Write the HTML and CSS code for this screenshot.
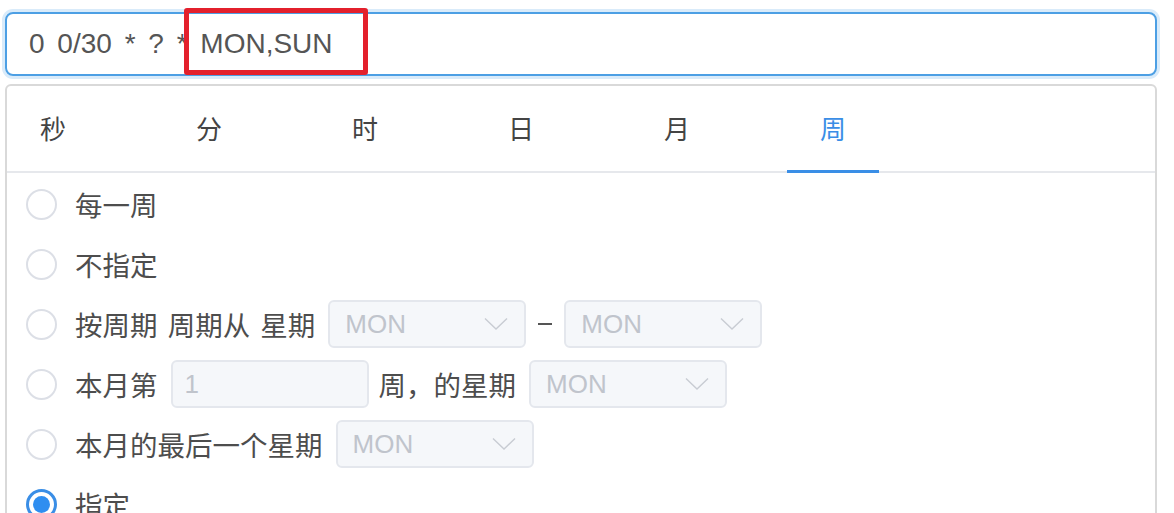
FILE: index.html
```html
<!DOCTYPE html>
<html lang="zh-CN">
  <head>
    <meta charset="UTF-8" />
    <meta name="viewport" content="width=device-width, initial-scale=1.0" />
    <title>Cron 表达式</title>
    <link rel="stylesheet" href="styles.css">
  </head>
  <body>
    <div class="cron-input">
      <span class="cron-text">0 0/30 * ? * MON,SUN</span>
      <span class="mark"></span>
    </div>

    <div class="panel">
      <div class="tabs">
        <div class="tab">秒</div>
        <div class="tab">分</div>
        <div class="tab">时</div>
        <div class="tab">日</div>
        <div class="tab">月</div>
        <div class="tab active">周</div>
      </div>

      <div class="options">
        <div class="row">
          <span class="radio"></span>
          <span class="label">每一周</span>
        </div>
        <div class="row">
          <span class="radio"></span>
          <span class="label">不指定</span>
        </div>
        <div class="row">
          <span class="radio"></span>
          <span class="label">按周期 周期从 星期</span>
          <div class="select">MON
            <svg viewBox="0 0 24 14" width="24" height="14"><polyline points="1,1.5 12,12 23,1.5" /></svg>
          </div>
          <span class="dash"></span>
          <div class="select">MON
            <svg viewBox="0 0 24 14" width="24" height="14"><polyline points="1,1.5 12,12 23,1.5" /></svg>
          </div>
        </div>
        <div class="row">
          <span class="radio"></span>
          <span class="label">本月第</span>
          <div class="field">1</div>
          <span class="label">周，的星期</span>
          <div class="select">MON
            <svg viewBox="0 0 24 14" width="24" height="14"><polyline points="1,1.5 12,12 23,1.5" /></svg>
          </div>
        </div>
        <div class="row">
          <span class="radio"></span>
          <span class="label">本月的最后一个星期</span>
          <div class="select">MON
            <svg viewBox="0 0 24 14" width="24" height="14"><polyline points="1,1.5 12,12 23,1.5" /></svg>
          </div>
        </div>
        <div class="row">
          <span class="radio checked"></span>
          <span class="label">指定</span>
        </div>
      </div>
    </div>
  </body>
</html>
```

FILE: styles.css
```css
body {
  margin: 0;
  background: #fff;
  font-family: "Liberation Sans", "Noto Sans CJK SC", sans-serif;
  color: #555;
  overflow: hidden;
}
.cron-input {
  position: relative;
  display: flex;
  align-items: center;
  height: 60px;
  margin: 12px 17px 0 5px;
  padding: 0 22px;
  border: 2px solid #4c9fe4;
  border-radius: 8px;
  box-shadow: 0 0 0 3px #d9ebfa;
}
.cron-text {
  font-size: 28px;
  word-spacing: 5px;
  color: #555;
}
.mark {
  position: absolute;
  left: 177px;
  top: -6px;
  width: 174px;
  height: 57px;
  border: 5px solid #e3202c;
  border-radius: 3px;
}
.panel {
  margin: 8px 17px 0 5px;
  height: 500px;
  border: 2px solid #d9d9d9;
  border-radius: 6px;
}
.tabs {
  display: flex;
  gap: 64px;
  height: 85px;
  border-bottom: 2px solid #e6e8ec;
}
.tab {
  position: relative;
  width: 92px;
  display: flex;
  justify-content: center;
  align-items: center;
  padding-bottom: 2px;
  font-family: "Noto Sans CJK SC", sans-serif;
  font-size: 26px;
  color: #444;
}
.tab.active {
  color: #3a8ee6;
}
.tab.active::after {
  content: "";
  position: absolute;
  left: 0;
  right: 0;
  bottom: -2px;
  height: 3px;
  background: #3a8ee6;
}
.options {
  padding: 1px 0 0 19px;
}
.row {
  display: flex;
  align-items: center;
  height: 60px;
}
.radio {
  position: relative;
  box-sizing: border-box;
  width: 31px;
  height: 31px;
  border: 2px solid #dcdfe6;
  border-radius: 50%;
  margin-right: 18px;
}
.radio.checked {
  border: 3px solid #3a8ee6;
}
.radio.checked::after {
  content: "";
  position: absolute;
  left: 4px;
  top: 4px;
  width: 17px;
  height: 17px;
  border-radius: 50%;
  background: #2f8ef0;
}
.label {
  font-family: "Noto Sans CJK SC", sans-serif;
  font-size: 27.5px;
  word-spacing: 4px;
  color: #4d4d4d;
  margin-right: 13px;
}
.select,
.field {
  box-sizing: border-box;
  display: flex;
  align-items: center;
  justify-content: space-between;
  width: 198px;
  height: 48px;
  padding: 0 16px 0 15px;
  background: #f5f7fa;
  border: 2px solid #e4e7ed;
  border-radius: 6px;
  font-size: 26px;
  color: #c0c4cc;
}
.field {
  margin-right: 10px;
  padding-left: 12px;
}
.select svg {
  fill: none;
  stroke: #c8ccd3;
  stroke-width: 1.4;
}
.dash {
  width: 14px;
  height: 2px;
  background: #555;
  margin: 0 12px;
}
```
